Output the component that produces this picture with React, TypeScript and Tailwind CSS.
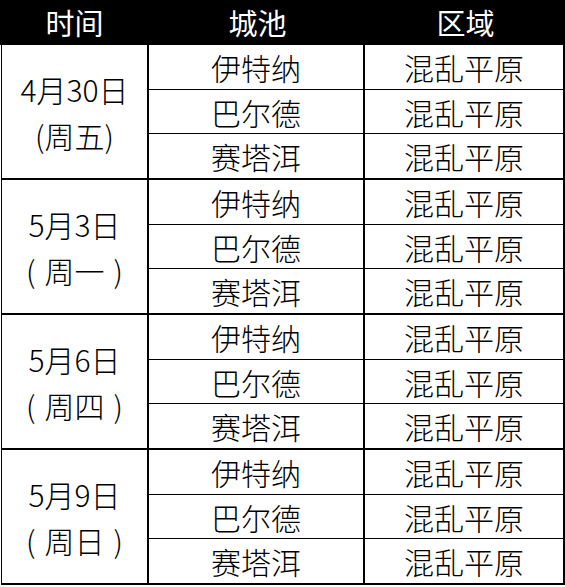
const groups = [
  { date: '4月30日', week: '周五', spaced: false },
  { date: '5月3日', week: '周一', spaced: true },
  { date: '5月6日', week: '周四', spaced: true },
  { date: '5月9日', week: '周日', spaced: true },
]

const cities = ['伊特纳', '巴尔德', '赛塔洱']

export default function App() {
  return (
    <div
      className="w-[565px] h-[587px] bg-white text-black"
      style={{ fontFamily: '"Noto Sans CJK SC", "Noto Sans", sans-serif' }}
    >
      {/* header */}
      <div className="flex h-[45px] bg-black text-white text-[29px] leading-none">
        <div className="w-[149px] flex items-center justify-center">时间</div>
        <div className="w-[217px] flex items-center justify-center">城池</div>
        <div className="flex-1 flex items-center justify-center">区域</div>
      </div>

      <div className="ml-[1px] w-[564px] border-l border-r-2 border-black">
        {groups.map((g) => (
          <div key={g.date} className="flex h-[135px] border-b-2 border-black">
            <div className="w-[147px] border-r-2 border-black flex flex-col items-center justify-center text-[30px] leading-[46px] font-light">
              <div>{g.date}</div>
              <div className="flex">
                <span>(</span>
                <span className={g.spaced ? 'mx-[9px]' : ''}>{g.week}</span>
                <span>)</span>
              </div>
            </div>
            <div className="flex-1 flex flex-col">
              {cities.map((c, i) => (
                <div
                  key={c}
                  className={`flex flex-1 text-[30px] leading-none font-light ${i > 0 ? 'border-t border-black' : ''}`}
                >
                  <div className="w-[216px] border-r-2 border-black flex items-center justify-center">
                    {c}
                  </div>
                  <div className="flex-1 flex items-center justify-center">混乱平原</div>
                </div>
              ))}
            </div>
          </div>
        ))}
      </div>
    </div>
  )
}
